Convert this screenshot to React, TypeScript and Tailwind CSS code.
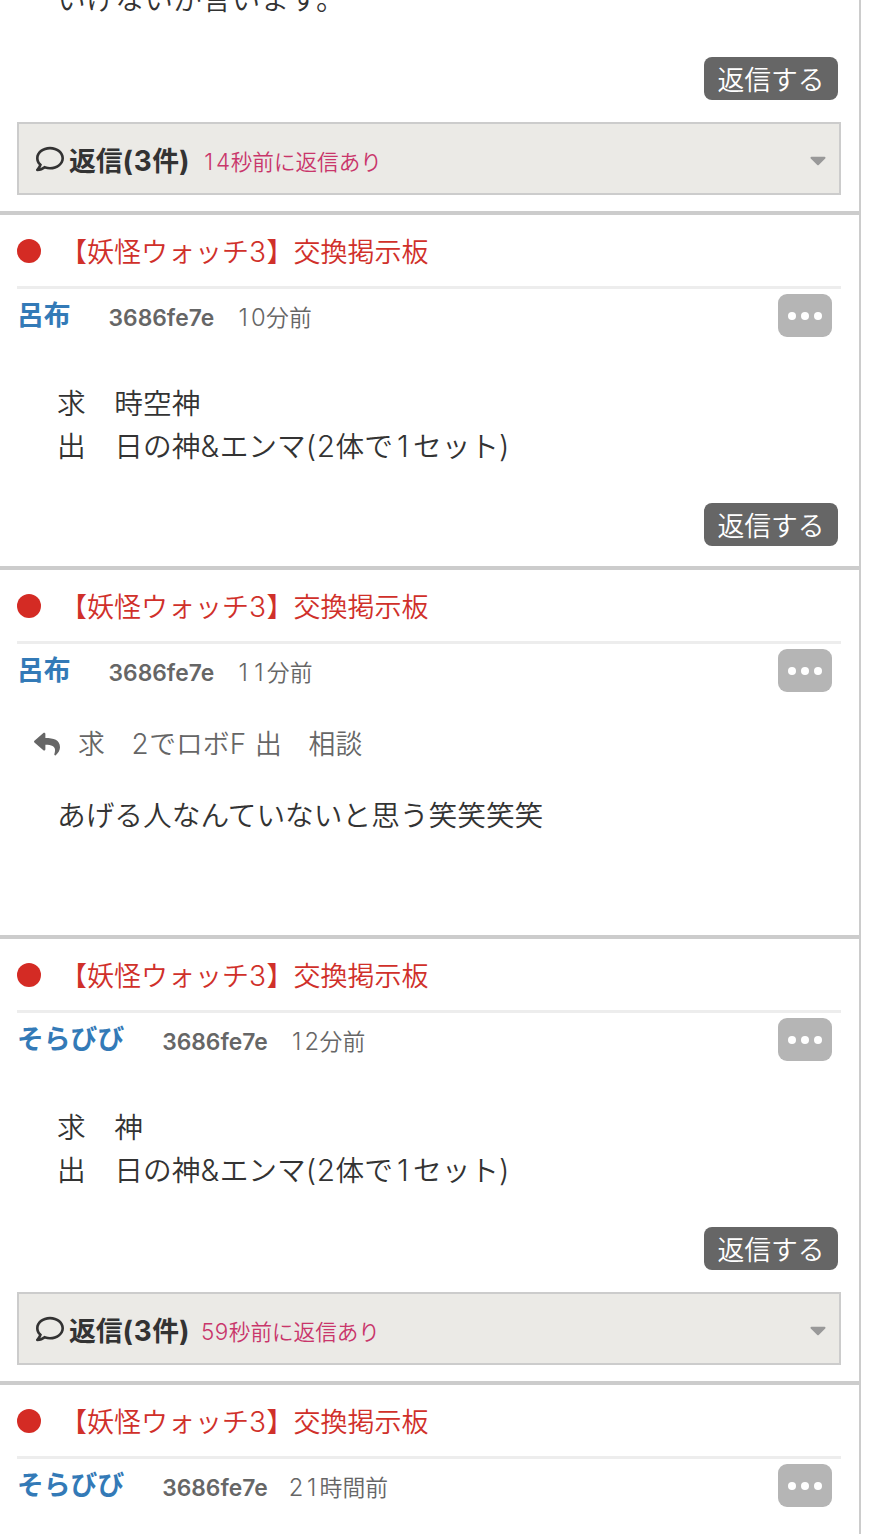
import { FaCaretDown, FaRegComment, FaReply } from "react-icons/fa"

type Post = {
  id: number
  name: string
  userId: string
  time: string
  quote?: string
  lines?: string[]
  canReply?: boolean
  replies?: { count: number; latest: string }
}

const posts: Post[] = [
  {
    id: 1,
    name: "呂布",
    userId: "3686fe7e",
    time: "10分前",
    lines: ["求　時空神", "出　日の神&エンマ(2体で1セット)"],
    canReply: true,
  },
  {
    id: 2,
    name: "呂布",
    userId: "3686fe7e",
    time: "11分前",
    quote: "求　2でロボF 出　相談",
    lines: ["あげる人なんていないと思う笑笑笑笑"],
  },
  {
    id: 3,
    name: "そらびび",
    userId: "3686fe7e",
    time: "12分前",
    lines: ["求　神", "出　日の神&エンマ(2体で1セット)"],
    canReply: true,
    replies: { count: 3, latest: "59秒前に返信あり" },
  },
  {
    id: 4,
    name: "そらびび",
    userId: "3686fe7e",
    time: "21時間前",
  },
]

// Latin runs are set a little larger than the kana and kanji around them,
// and "1" takes the same width as the other digits
function Mixed({ text }: { text: string }) {
  return (
    <>
      {text.split(/(1|[\x20-\x30\x32-\x7e]+)/).map((part, i) => {
        if (part === "1") {
          return (
            <span key={i} className="inline-block w-[0.67em] text-center text-[1.04em] leading-none">
              1
            </span>
          )
        }
        return i % 2 ? (
          <span key={i} className="text-[1.04em] leading-none tracking-[0.02em]">
            {part}
          </span>
        ) : (
          part
        )
      })}
    </>
  )
}

function ReplyButton() {
  return (
    <div className="flex justify-end pr-[21px]">
      <button className="flex h-[43px] w-[134px] items-center justify-center rounded-lg bg-[#666] pt-[3px] text-[26.8px] leading-none font-[350] text-white">
        返信する
      </button>
    </div>
  )
}

function ReplyBar({ count, latest }: { count: number; latest: string }) {
  return (
    <div className="mt-[22px] mr-[18px] ml-[17px] flex h-[73px] items-center border-2 border-[#ccc] bg-[#ebeae6] pr-2 pl-[17px]">
      <FaRegComment className="mr-[5px] size-7 text-[#333]" />
      <span className="pt-1.5 text-[26.8px] font-bold text-[#333]">
        <Mixed text={`返信(${count}件)`} />
      </span>
      <span className="ml-[11px] pt-2 text-[21.6px] font-[350] text-[#c9366b]">
        <Mixed text={latest} />
      </span>
      <FaCaretDown className="mt-[3px] ml-auto size-[26px] text-[#999]" />
    </div>
  )
}

function PostBody({ lines }: { lines: string[] }) {
  return (
    <div className="pl-[57px] text-[28.7px] leading-[43px] font-[350] text-[#333]">
      {lines.map((line) => (
        <p key={line} className="h-[43px]">
          <Mixed text={line} />
        </p>
      ))}
    </div>
  )
}

function PostCard({ post }: { post: Post }) {
  return (
    <article>
      {/* Board title */}
      <div className="mr-[18px] ml-[17px] flex h-[74px] items-center border-b-[3px] border-[#ededed]">
        <span className="size-6 rounded-full bg-[#d42b24]" />
        <h2 className="ml-[19px] pt-1.5 text-[27px] font-[350] text-[#d0302a]">
          <Mixed text="【妖怪ウォッチ3】交換掲示板" />
        </h2>
      </div>

      {/* Author row */}
      <div className="flex h-[53px] items-center pr-[27px] pl-[17px]">
        <a className="text-[26.8px] font-bold text-[#337ab7]">{post.name}</a>
        <span className="ml-[38px] pt-[5px] text-[22.8px] font-semibold text-[#666]">{post.userId}</span>
        <span className="ml-[21px] pt-1.5 text-[22.8px] font-[350] text-[#666]">
          <Mixed text={post.time} />
        </span>
        <button className="ml-auto flex h-[43px] w-[54px] items-center justify-center gap-[5px] rounded-[9px] bg-[#b5b5b5]">
          <i className="size-2 rounded-full bg-white" />
          <i className="size-2 rounded-full bg-white" />
          <i className="size-2 rounded-full bg-white" />
        </button>
      </div>

      {post.quote && (
        <div className="mt-5 flex h-[54px] items-center pl-[34px] text-[#666]">
          <FaReply className="mr-[18px] size-[26px]" />
          <span className="text-[26.8px] font-[350]">
            <Mixed text={post.quote} />
          </span>
        </div>
      )}
      {post.lines && (
        <div className={post.quote ? "pt-[23px] pb-[78px]" : "pt-10 pb-[35px]"}>
          <PostBody lines={post.lines} />
        </div>
      )}
      {post.canReply && <ReplyButton />}
      {post.replies && <ReplyBar count={post.replies.count} latest={post.replies.latest} />}
    </article>
  )
}

export default function App() {
  return (
    <div className="h-[1534px] overflow-hidden bg-white font-['Inter','Noto_Sans_CJK_JP',sans-serif]">
      <main className="h-full w-[861px] overflow-hidden border-r-2 border-[#ccc]">
        <div className="border-b-4 border-[#ccc] pb-4">
          <div className="-mt-[22px] pb-9 tracking-[0.4px]">
            <PostBody lines={["いけないが言います。"]} />
          </div>
          <ReplyButton />
          <ReplyBar count={3} latest="14秒前に返信あり" />
        </div>
        {posts.map((post) => (
          <div
            key={post.id}
            className={
              post.replies
                ? "border-b-4 border-[#ccc] pb-4"
                : "border-b-4 border-[#ccc] pb-5 last:border-b-0"
            }
          >
            <PostCard post={post} />
          </div>
        ))}
      </main>
    </div>
  )
}
